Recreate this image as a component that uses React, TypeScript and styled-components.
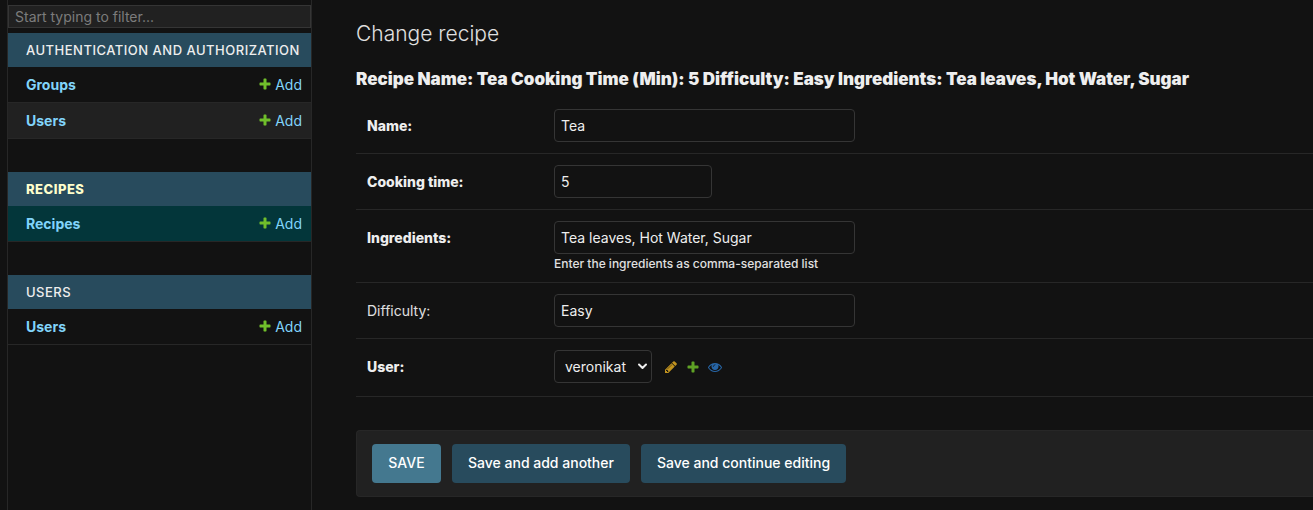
import React from "react";
import styled, { createGlobalStyle, css } from "styled-components";

const color = {
  body: "#121212",
  darkened: "#212121",
  hairline: "#272727",
  border: "#353535",
  text: "#eeeeee",
  quiet: "#e0e0e0",
  link: "#81d4fa",
  header: "#284b5d",
  primary: "#44788f",
  selected: "#03363a",
  accent: "#ffffcc",
};

const GlobalStyle = createGlobalStyle`
  *, *::before, *::after { box-sizing: border-box; }
  body {
    margin: 0;
    background: ${color.body};
    color: ${color.text};
    font-family: Inter, "Liberation Sans", sans-serif;
    font-size: 14px;
    line-height: 18px;
    color-scheme: dark;
  }
  input, select, button { font: inherit; color: inherit; }
`;

const Page = styled.div`
  display: flex;
  min-height: 100vh;
`;

const Sidebar = styled.nav`
  flex: 0 0 305px;
  margin-left: 7px;
  padding-top: 5px;
  border: solid ${color.hairline};
  border-width: 0 1px;
`;

const FilterInput = styled.input`
  display: block;
  width: 100%;
  height: 23px;
  margin-bottom: 5px;
  padding: 0 6px;
  border: 1px solid ${color.border};
  background: ${color.darkened};
  outline: none;
  &::placeholder { color: #7c7c7c; opacity: 1; }
`;

const AppTable = styled.table`
  width: 100%;
  margin-bottom: 33px;
  border-collapse: separate;
  border-spacing: 0;
`;

const Caption = styled.caption<{ $current?: boolean }>`
  padding: 8px 0 8px 18px;
  background: ${color.header};
  text-align: left;
  text-transform: uppercase;
  white-space: nowrap;
  font-size: 13px;
  font-weight: 500;
  letter-spacing: 0.5px;
  a { color: ${color.text}; text-decoration: none; }
  ${(p) => p.$current && css`
    font-weight: 800;
    a { color: ${color.accent}; }
  `}
`;

const ModelRow = styled.tr<{ $current?: boolean }>`
  background: ${color.body};
  &:nth-child(even) { background: ${color.darkened}; }
  ${(p) => p.$current && css`background: ${color.selected};`}
  th, td {
    height: 36px;
    padding: 0 9px 0 18px;
    border-bottom: 1px solid ${color.hairline};
  }
  th { text-align: left; font-weight: 700; }
`;

const ModelLink = styled.a`
  color: ${color.link};
  text-decoration: none;
`;

const AddLink = styled(ModelLink)`
  display: flex;
  align-items: flex-start;
  justify-content: flex-end;
  gap: 3px;
  svg { margin-top: 1px; }
`;

const Content = styled.main`
  flex: 1;
  min-width: 0;
  padding: 20px 0 13px 44px;
`;

const Title = styled.h1`
  margin: 0 0 20px;
  color: ${color.quiet};
  font-size: 21px;
  line-height: 27px;
  font-weight: 300;
`;

const Subtitle = styled.h2`
  margin: 0 0 7px;
  font-size: 17px;
  line-height: 24px;
  font-weight: 900;
`;

const FormRow = styled.div`
  display: flex;
  align-items: flex-start;
  padding: 11px;
  border-bottom: 1px solid ${color.hairline};
`;

const Label = styled.label<{ $required?: boolean }>`
  flex: 0 0 187px;
  line-height: 33px;
  font-weight: ${(p) => (p.$required ? 800 : 400)};
  color: ${(p) => (p.$required ? color.text : color.quiet)};
`;

const fieldBox = css`
  display: block;
  height: 33px;
  border: 1px solid ${color.border};
  border-radius: 4px;
  background: ${color.body};
  color: ${color.text};
  outline: none;
`;

const TextField = styled.input<{ $short?: boolean }>`
  ${fieldBox}
  width: ${(p) => (p.$short ? "158px" : "301px")};
  padding: 0 6px;
  appearance: textfield;
  &::-webkit-inner-spin-button { display: none; }
`;

const HelpText = styled.p`
  margin: 2px 0 0;
  color: ${color.quiet};
  font-size: 12px;
  line-height: 15px;
  font-weight: 500;
`;

const RelatedWidget = styled.div`
  display: flex;
  align-items: center;
  gap: 8px;
  padding-bottom: 2px;
`;

const SelectWrap = styled.div`
  display: grid;
  align-items: center;
  margin-right: 4px;
  > * { grid-area: 1 / 1; }
  svg { justify-self: end; margin-right: 4px; pointer-events: none; }
`;

const Select = styled.select`
  ${fieldBox}
  width: 98px;
  padding: 0 20px 0 10px;
  appearance: none;
`;

const IconLink = styled.a`
  display: flex;
`;

const SubmitRow = styled.div`
  display: flex;
  gap: 11px;
  margin-top: 33px;
  padding: 13px 15px;
  border: 1px solid ${color.hairline};
  border-right: 0;
  border-radius: 4px 0 0 4px;
  background: ${color.darkened};
`;

const Button = styled.button<{ $primary?: boolean }>`
  height: 39px;
  min-width: 69px;
  padding: 0 16px 2px;
  border: 0;
  border-radius: 4px;
  background: ${(p) => (p.$primary ? color.primary : color.header)};
  color: #fff;
  font-weight: 500;
  white-space: nowrap;
  text-transform: ${(p) => (p.$primary ? "uppercase" : "none")};
  cursor: pointer;
`;

const paths = {
  add: "M1600 796v192q0 40-28 68t-68 28h-416v416q0 40-28 68t-68 28h-192q-40 0-68-28t-28-68v-416h-416q-40 0-68-28t-28-68v-192q0-40 28-68t68-28h416v-416q0-40 28-68t68-28h192q40 0 68 28t28 68v416h416q40 0 68 28t28 68z",
  change:
    "M491 1536l91-91-235-235-91 91v107h128v128h107zm523-928q0-22-22-22-10 0-17 7l-542 542q-7 7-7 17 0 22 22 22 10 0 17-7l542-542q7-7 7-17zm-54-192l416 416-832 832h-416v-416zm683 96q0 53-37 90l-166 166-416-416 166-165q36-38 90-38 53 0 91 38l235 234q37 39 37 91z",
  view: "M1664 960q-152-236-381-353 61 104 61 225 0 185-131.5 316.5t-316.5 131.5-316.5-131.5-131.5-316.5q0-121 61-225-229 117-381 353 133 205 333.5 326.5t434.5 121.5 434.5-121.5 333.5-326.5zm-720-384q0-20-14-34t-34-14q-125 0-214.5 89.5t-89.5 214.5q0 20 14 34t34 14 34-14 14-34q0-86 61-147t147-61q20 0 34-14t14-34zm848 384q0 34-20 69-140 230-376.5 368.5t-499.5 138.5-499.5-139-376.5-368q-20-35-20-69t20-69q140-229 376.5-368t499.5-139 499.5 139 376.5 368q20 35 20 69z",
};

function Icon({ name, fill }: { name: keyof typeof paths; fill: string }) {
  return (
    <svg width="14" height="14" viewBox="0 0 1792 1792" fill={fill} aria-hidden="true">
      {name === "view" && <circle cx="896" cy="832" r="370" />}
      <path d={paths[name]} />
      {name === "view" && (
        <path d="M680 832q0-190 216-230" fill="none" stroke={color.body} strokeWidth="90" strokeLinecap="round" />
      )}
    </svg>
  );
}

type AppSection = { id: string; name: string; models: string[]; current?: boolean };

const sections: AppSection[] = [
  { id: "auth", name: "Authentication and Authorization", models: ["Groups", "Users"] },
  { id: "recipes", name: "Recipes", models: ["Recipes"], current: true },
  { id: "users", name: "Users", models: ["Users"] },
];

function AppModule({ section }: { section: AppSection }) {
  return (
    <AppTable>
      <Caption $current={section.current}>
        <a href={`#${section.id}`}>{section.name}</a>
      </Caption>
      <tbody>
        {section.models.map((model) => (
          <ModelRow key={model} $current={section.current}>
            <th scope="row">
              <ModelLink href={`#${section.id}-${model}`}>{model}</ModelLink>
            </th>
            <td>
              <AddLink href={`#${section.id}-${model}-add`}>
                <Icon name="add" fill="#70bf2b" />
                Add
              </AddLink>
            </td>
          </ModelRow>
        ))}
      </tbody>
    </AppTable>
  );
}

export default function App() {
  return (
    <>
      <GlobalStyle />
      <Page>
        <Sidebar aria-label="Sidebar">
          <FilterInput type="search" placeholder="Start typing to filter..." aria-label="Filter navigation items" />
          {sections.map((section) => (
            <AppModule key={section.id} section={section} />
          ))}
        </Sidebar>
        <Content>
          <Title>Change recipe</Title>
          <Subtitle>
            Recipe Name: Tea Cooking Time (Min): 5 Difficulty: Easy Ingredients: Tea leaves, Hot Water, Sugar
          </Subtitle>
          <form onSubmit={(e) => e.preventDefault()}>
            <FormRow>
              <Label $required htmlFor="name">Name:</Label>
              <TextField id="name" type="text" defaultValue="Tea" />
            </FormRow>
            <FormRow>
              <Label $required htmlFor="cooking_time">Cooking time:</Label>
              <TextField $short id="cooking_time" type="number" defaultValue="5" />
            </FormRow>
            <FormRow>
              <Label $required htmlFor="ingredients">Ingredients:</Label>
              <div>
                <TextField id="ingredients" type="text" defaultValue="Tea leaves, Hot Water, Sugar" aria-describedby="ingredients_help" />
                <HelpText id="ingredients_help">Enter the ingredients as comma-separated list</HelpText>
              </div>
            </FormRow>
            <FormRow>
              <Label htmlFor="difficulty">Difficulty:</Label>
              <TextField id="difficulty" type="text" defaultValue="Easy" />
            </FormRow>
            <FormRow>
              <Label $required htmlFor="user">User:</Label>
              <RelatedWidget>
                <SelectWrap>
                  <Select id="user" defaultValue="veronikat">
                    <option value="veronikat">veronikat</option>
                  </Select>
                  <svg width="11" height="8" viewBox="0 0 11 8" fill="none" stroke="#eee" strokeWidth="2" strokeLinecap="round" strokeLinejoin="round" aria-hidden="true">
                    <path d="M2 1.5 5.5 5 9 1.5" />
                  </svg>
                </SelectWrap>
                <IconLink href="#user-change" aria-label="Change selected user">
                  <Icon name="change" fill="#c1931f" />
                </IconLink>
                <IconLink href="#user-add" aria-label="Add another user">
                  <Icon name="add" fill="#5fa225" />
                </IconLink>
                <IconLink href="#user-view" aria-label="View selected user">
                  <Icon name="view" fill="#2765a5" />
                </IconLink>
              </RelatedWidget>
            </FormRow>
            <SubmitRow>
              <Button $primary type="submit">Save</Button>
              <Button type="submit">Save and add another</Button>
              <Button type="submit">Save and continue editing</Button>
            </SubmitRow>
          </form>
        </Content>
      </Page>
    </>
  );
}
